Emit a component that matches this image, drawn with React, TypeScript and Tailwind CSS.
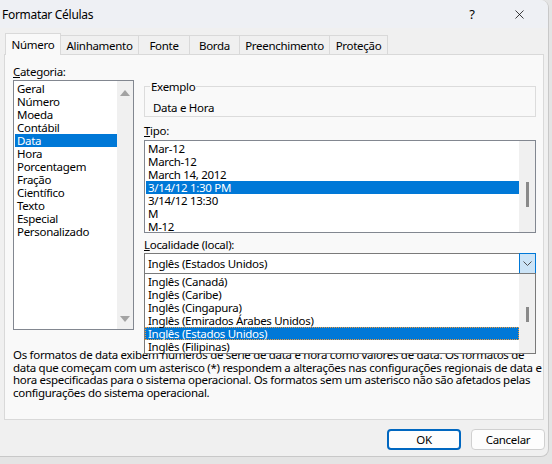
import { X } from 'lucide-react';

const font = { fontFamily: '"Noto Sans", "Open Sans", sans-serif' };

const categorias = [
  'Geral',
  'Número',
  'Moeda',
  'Contábil',
  'Data',
  'Hora',
  'Porcentagem',
  'Fração',
  'Científico',
  'Texto',
  'Especial',
  'Personalizado',
];

const tipos = ['Mar-12', 'March-12', 'March 14, 2012', '3/14/12 1:30 PM', '3/14/12 13:30', 'M', 'M-12'];

const locais = [
  'Inglês (Canadá)',
  'Inglês (Caribe)',
  'Inglês (Cingapura)',
  'Inglês (Emirados Árabes Unidos)',
  'Inglês (Estados Unidos)',
  'Inglês (Filipinas)',
];

const tabs = [
  { label: 'Alinhamento', w: 'w-[78px]' },
  { label: 'Fonte', w: 'w-[51px]' },
  { label: 'Borda', w: 'w-[50px]' },
  { label: 'Preenchimento', w: 'w-[90px]' },
  { label: 'Proteção', w: 'w-[58px]' },
];

const Tri = ({ up }: { up?: boolean }) => (
  <svg width="10" height="6" viewBox="0 0 10 6">
    <path d={up ? 'M0 6 L5 0 L10 6 Z' : 'M0 0 L5 6 L10 0 Z'} fill="#a3a3a3" />
  </svg>
);

const App = () => {
  return (
    <div
      className="w-[552px] h-[464px] overflow-hidden bg-[#e4e4e4] text-[11.5px] text-black leading-[13px] tracking-[-0.3px]"
      style={font}
    >
      <div className="w-[549px] h-[457px] bg-[#f0f0f0] rounded-r-lg border-r border-b border-[#c8c8c8] flex flex-col">
        {/* Title bar */}
        <div className="h-[28px] bg-[#eef0f4] flex items-center pl-[2px] rounded-tr-lg text-[12px]">
          <span className="flex-1">Formatar Células</span>
          <span className="w-[14px] text-center text-[13px] mr-[33px]">?</span>
          <X size={15} strokeWidth={1.2} className="mr-[21px]" />
        </div>

        {/* Tabs */}
        <div className="flex items-end pl-[5px] mt-[5px] h-[21px] relative z-10">
          <div className="h-[22px] -mb-px w-[56px] bg-[#f9f9f9] border border-b-0 border-[#d9d9d9] flex items-center justify-center">
            Número
          </div>
          {tabs.map((t) => (
            <div
              key={t.label}
              className={`${t.w} h-[19px] border border-l-0 border-b-0 border-[#d9d9d9] bg-[#f0f0f0] flex items-center justify-center`}
            >
              {t.label}
            </div>
          ))}
        </div>

        {/* Panel */}
        <div className="mx-[4px] h-[366px] bg-[#f9f9f9] border border-[#d9d9d9] pl-[8px] pr-[7px] pt-[10px]">
          <div className="flex gap-[10px]">
            {/* Categoria */}
            <div className="w-[121px] shrink-0">
              <div className="h-[15px]">
                <span className="underline">C</span>ategoria:
              </div>
              <div className="h-[250px] border border-[#828790] bg-white flex">
                <div className="flex-1 pt-px pl-px">
                  {categorias.map((c) => (
                    <div
                      key={c}
                      className={`h-[13px] pl-[2px] flex items-center ${
                        c === 'Data' ? 'bg-[#0078d7] text-white' : ''
                      }`}
                    >
                      {c}
                    </div>
                  ))}
                </div>
                <div className="w-[16px] bg-[#f0f0f0] flex flex-col items-center justify-between pt-[9px] pb-[7px]">
                  <Tri up />
                  <Tri />
                </div>
              </div>
            </div>

            {/* Right side */}
            <div className="flex-1">
              <div className="relative mt-[21px] h-[31px] border border-[#dcdcdc] pl-[8px] pt-[14px]">
                <span className="absolute -top-[7px] left-[5px] bg-[#f9f9f9] px-px">Exemplo</span>
                Data e Hora
              </div>

              <div className="mt-[7px] h-[13px]">
                <span className="underline">T</span>ipo:
              </div>
              <div className="mt-[3px] h-[93px] border border-[#828790] bg-white flex">
                <div className="flex-1 pt-px pl-px">
                  {tipos.map((t) => (
                    <div
                      key={t}
                      className={`h-[13px] pl-[2px] flex items-center ${
                        t === '3/14/12 1:30 PM' ? 'bg-[#0078d7] text-white' : ''
                      }`}
                    >
                      {t}
                    </div>
                  ))}
                </div>
                <div className="w-[16px] bg-[#f0f0f0] pt-[41px]">
                  <div className="mx-auto w-[3px] h-[25px] bg-[#8a8a8a]" />
                </div>
              </div>

              <div className="mt-[5px] h-[13px]">
                <span className="underline">L</span>ocalidade (local):
              </div>
              <div className="relative mt-[2px] h-[21px] border border-[#7a7a7a] bg-white flex items-center">
                <span className="flex-1 pl-[3px]">Inglês (Estados Unidos)</span>
                <div className="w-[17px] h-[21px] -mr-px bg-[#cce4f7] border border-[#0078d7] flex items-center justify-center">
                  <svg width="9" height="5" viewBox="0 0 9 5">
                    <path d="M0.5 0.5 L4.5 4.5 L8.5 0.5" fill="none" stroke="#505050" strokeWidth="1" />
                  </svg>
                </div>

                {/* open dropdown */}
                <div className="absolute top-[19px] -left-px -right-px h-[81px] border border-[#7a7a7a] bg-white flex z-20">
                  <div className="flex-1 pt-px">
                    {locais.map((l) => (
                      <div
                        key={l}
                        className={`h-[13px] pl-[2px] flex items-center ${
                          l === 'Inglês (Estados Unidos)'
                            ? 'bg-[#0078d7] text-white border border-dotted border-[#f29a38]'
                            : 'border border-transparent'
                        }`}
                      >
                        {l}
                      </div>
                    ))}
                  </div>
                  <div className="w-[16px] bg-[#f0f0f0] pt-[33px]">
                    <div className="mx-auto w-[3px] h-[15px] bg-[#8a8a8a]" />
                  </div>
                </div>
              </div>
            </div>
          </div>

          <p className="mt-[19px] leading-[12.5px] whitespace-nowrap">
            Os formatos de data exibem números de série de data e hora como valores de data. Os formatos de
            <br />
            data que começam com um asterisco (*) respondem a alterações nas configurações regionais de data e
            <br />
            hora especificadas para o sistema operacional. Os formatos sem um asterisco não são afetados pelas
            <br />
            configurações do sistema operacional.
          </p>
        </div>

        {/* Buttons */}
        <div className="flex justify-end gap-[10px] mt-[9px] pr-[3px]">
          <button className="w-[74px] h-[21px] rounded-[4px] border-2 border-[#0067c0] bg-[#fdfdfd] flex items-center justify-center">
            OK
          </button>
          <button className="w-[74px] h-[21px] rounded-[4px] border border-[#d0d0d0] bg-[#fdfdfd] flex items-center justify-center">
            Cancelar
          </button>
        </div>
      </div>
    </div>
  );
};

export default App;
